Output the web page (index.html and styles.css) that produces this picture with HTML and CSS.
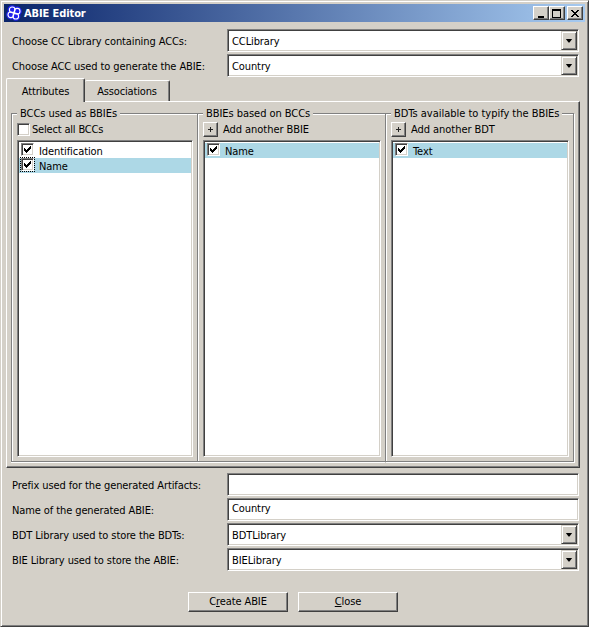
FILE: index.html
```html
<!DOCTYPE html>
<html lang="en">
<head>
<meta charset="utf-8">
<title>ABIE Editor</title>
<link rel="stylesheet" href="styles.css">
</head>
<body>
<main class="window">
  <header class="titlebar">
    <svg class="logo" viewBox="0 0 16 16" width="16" height="16">
      <circle cx="8" cy="8" r="5" fill="#2222ee"/>
      <g fill="none" stroke="#2222ee" stroke-width="3.6">
        <circle cx="6.2" cy="4.8" r="2.8"/><circle cx="11.2" cy="6.2" r="2.8"/>
        <circle cx="9.8" cy="11.2" r="2.8"/><circle cx="4.8" cy="9.8" r="2.8"/>
      </g>
      <g fill="none" stroke="#fff" stroke-width="1.1">
        <circle cx="6.2" cy="4.8" r="2.8"/><circle cx="11.2" cy="6.2" r="2.8"/>
        <circle cx="9.8" cy="11.2" r="2.8"/><circle cx="4.8" cy="9.8" r="2.8"/>
      </g>
    </svg>
    <h1>ABIE Editor</h1>
    <div class="controls">
      <button class="ctl" aria-label="Minimize"><svg width="12" height="10" shape-rendering="crispEdges"><path d="M3 7h6v2H3z"/></svg></button>
      <button class="ctl" aria-label="Maximize"><svg width="12" height="10" shape-rendering="crispEdges"><path fill-rule="evenodd" d="M1 0h9v9H1zM2 2v6h7V2z"/></svg></button>
      <button class="ctl close" aria-label="Close window"><svg width="12" height="10" shape-rendering="crispEdges"><path d="M2 1h2v1h1v1h2V2h1V1h2v1H9v1H8v1H7v1h1v1h1v1h1v1H8V7H7V6H5v1H4v1H2V7h1V6h1V5h1V4H4V3H3V2H2z"/></svg></button>
    </div>
  </header>

  <section class="form top">
    <div class="row"><label>Choose CC Library containing ACCs:</label><div class="field"><span>CCLibrary</span><button class="drop" aria-label="Open"><i></i></button></div></div>
    <div class="row"><label>Choose ACC used to generate the ABIE:</label><div class="field"><span>Country</span><button class="drop" aria-label="Open"><i></i></button></div></div>
  </section>

  <nav class="tabs"><div class="tab active">Attributes</div><div class="tab">Associations</div></nav>
  <section class="panel">
    <div class="group g1">
      <h2>BCCs used as BBIEs</h2>
      <div class="tool"><span class="check"></span><span class="all">Select all BCCs</span></div>
      <div class="list">
        <div class="item"><span class="check"><svg width="9" height="9" shape-rendering="crispEdges"><path d="M1 3h1v1h1v1h1V4h1V3h1V2h1V1h1v3H7v1H6v1H5v1H4v1H3V7H2V6H1z"/></svg></span>Identification</div>
        <div class="item sel"><span class="check focus"><svg width="9" height="9" shape-rendering="crispEdges"><path d="M1 3h1v1h1v1h1V4h1V3h1V2h1V1h1v3H7v1H6v1H5v1H4v1H3V7H2V6H1z"/></svg></span>Name</div>
      </div>
    </div>
    <div class="group g2">
      <h2>BBIEs based on BCCs</h2>
      <div class="tool"><button class="add" aria-label="Add"></button><span>Add another BBIE</span></div>
      <div class="list">
        <div class="item sel"><span class="check"><svg width="9" height="9" shape-rendering="crispEdges"><path d="M1 3h1v1h1v1h1V4h1V3h1V2h1V1h1v3H7v1H6v1H5v1H4v1H3V7H2V6H1z"/></svg></span>Name</div>
      </div>
    </div>
    <div class="group g3">
      <h2>BDTs available to typify the BBIEs</h2>
      <div class="tool"><button class="add" aria-label="Add"></button><span>Add another BDT</span></div>
      <div class="list">
        <div class="item sel"><span class="check"><svg width="9" height="9" shape-rendering="crispEdges"><path d="M1 3h1v1h1v1h1V4h1V3h1V2h1V1h1v3H7v1H6v1H5v1H4v1H3V7H2V6H1z"/></svg></span>Text</div>
      </div>
    </div>
  </section>

  <section class="form bottom">
    <div class="row"><label>Prefix used for the generated Artifacts:</label><div class="field"></div></div>
    <div class="row"><label>Name of the generated ABIE:</label><div class="field text"><span>Country</span></div></div>
    <div class="row"><label>BDT Library used to store the BDTs:</label><div class="field"><span>BDTLibrary</span><button class="drop" aria-label="Open"><i></i></button></div></div>
    <div class="row"><label>BIE Library used to store the ABIE:</label><div class="field"><span>BIELibrary</span><button class="drop" aria-label="Open"><i></i></button></div></div>
  </section>
  <footer class="actions"><button class="btn">C<u>r</u>eate ABIE</button><button class="btn"><u>C</u>lose</button></footer>
</main>
</body>
</html>
```
FILE: styles.css
```css
* { box-sizing: border-box; }
body { margin: 0; }
.window {
  width: 589px; height: 627px; padding: 2px; overflow: hidden;
  background: #d4d0c8; color: #000;
  border: 1px solid; border-color: #d4d0c8 #404040 #404040 #d4d0c8;
  box-shadow: inset 1px 1px #fff, inset -1px -1px #808080;
  font: 11px/15px "DejaVu Sans Condensed", "DejaVu Sans", sans-serif;
  white-space: nowrap;
}
h1, h2 { margin: 0; font: inherit; }
button {
  font: inherit; padding: 0; margin: 0; color: #000; background: #d4d0c8; border-radius: 0;
  border: 1px solid; border-color: #fff #404040 #404040 #fff;
  box-shadow: inset -1px -1px #808080;
}
.titlebar {
  height: 18px; margin: 1px 1px 0; padding: 0 2px; display: flex; align-items: center;
  background: linear-gradient(90deg, #0a246a, #a6caf0);
}
.logo { margin-right: 2px; }
h1 { color: #fff; font-weight: bold; font-size: 11px; letter-spacing: -0.1px; }
.controls { margin-left: auto; display: flex; }
.ctl { width: 16px; height: 14px; }
.ctl svg { display: block; margin: 1px 0 0 1px; }
.close { margin-left: 2px; }
.form { display: flex; flex-direction: column; gap: 2px; margin: 0 7px 0 9px; }
.top { margin-top: 7px; }
.row { display: flex; align-items: center; height: 23px; }
.row label { width: 215px; padding-top: 2px; letter-spacing: -0.1px; }
.field {
  flex: none; width: 352px; height: 23px; background: #fff; display: flex;
  align-items: center; justify-content: space-between; padding: 1px 1px 1px 4px;
  border: 1px solid; border-color: #808080 #fff #fff #808080;
  box-shadow: inset 1px 1px #404040, inset -1px -1px #d4d0c8;
  letter-spacing: -0.1px;
}
.field span { margin-top: 2px; }
.text span { margin-top: -3px; }
.drop {
  width: 16px; height: 19px; border-color: #d4d0c8 #404040 #404040 #d4d0c8;
  box-shadow: inset 1px 1px #fff, inset -1px -1px #808080;
  display: flex; align-items: center; justify-content: center;
}
.drop i { width: 7px; height: 4px; background: #000; clip-path: polygon(0 0, 100% 0, 57% 100%, 43% 100%); }
.tabs { height: 24px; margin: 1px 0 0 3px; display: flex; align-items: flex-end; position: relative; z-index: 1; }
.tab {
  width: 85px; height: 21px; text-align: center; line-height: 21px; margin-bottom: 1px; letter-spacing: -0.15px;
  border: solid #fff; border-width: 1px 1px 0 0; border-right-color: #404040;
  border-radius: 2px 2px 0 0; box-shadow: inset -1px 0 #808080;
}
.active { width: 79px; height: 24px; line-height: 25px; border-left-width: 1px; margin-bottom: 0; background: #d4d0c8; letter-spacing: -0.15px; }
.panel {
  width: 574px; height: 367px; margin: -1px 0 0 3px; padding: 11px 4px 4px; display: flex;
  border: 1px solid; border-color: #fff #404040 #404040 #fff; box-shadow: inset -1px -1px #808080;
}
.group {
  height: 349px; padding: 0 0 0 5px;
  border: solid #808080; border-width: 1px 0 1px 1px;
  box-shadow: inset 1px 1px #fff, 0 1px #fff;
}
.g1 { width: 186px; }
.g2 { width: 188px; }
.g3 { width: 189px; border-right-width: 1px; box-shadow: inset 1px 1px #fff, 1px 1px #fff; }
h2 { width: max-content; height: 15px; margin: -8px 0 0; padding: 0 3px; background: #d4d0c8; letter-spacing: -0.05px; }
.g3 h2 { letter-spacing: -0.02px; }
.tool { display: flex; align-items: center; height: 15px; margin: 1px 0 3px; }
.tool .all { margin-left: 2px; letter-spacing: -0.18px; }
.tool .add + span { margin-left: 5px; letter-spacing: -0.05px; }
.add {
  width: 15px; height: 15px;
  background: linear-gradient(#222, #222) 4px 6px / 5px 1px no-repeat, linear-gradient(#222, #222) 6px 4px / 1px 5px no-repeat, #d4d0c8;
}
.check {
  flex: none; width: 13px; height: 13px; background: #fff;
  border: 1px solid; border-color: #808080 #fff #fff #808080;
  box-shadow: inset 1px 1px #404040, inset -1px -1px #d4d0c8;
}
.check svg { display: block; margin: 1px; }
.focus { outline: 1px dotted #000; outline-offset: 0; }
.list {
  width: 178px; height: 317px; padding: 2px 1px 1px; background: #fff;
  border: 1px solid; border-color: #808080 #fff #fff #808080;
  box-shadow: inset 1px 1px #404040, inset -1px -1px #d4d0c8;
}
.g1 .list { width: 176px; }
.item { height: 15px; display: flex; padding-left: 2px; line-height: 17px; letter-spacing: -0.08px; }
.item .check { margin-right: 5px; }
.sel { background: #add8e6; }
.bottom { margin-top: 5px; }
.actions { display: flex; gap: 10px; margin: 21px 0 0 185px; }
.btn { width: 100px; height: 20px; line-height: 18px; letter-spacing: -0.1px; }
```
